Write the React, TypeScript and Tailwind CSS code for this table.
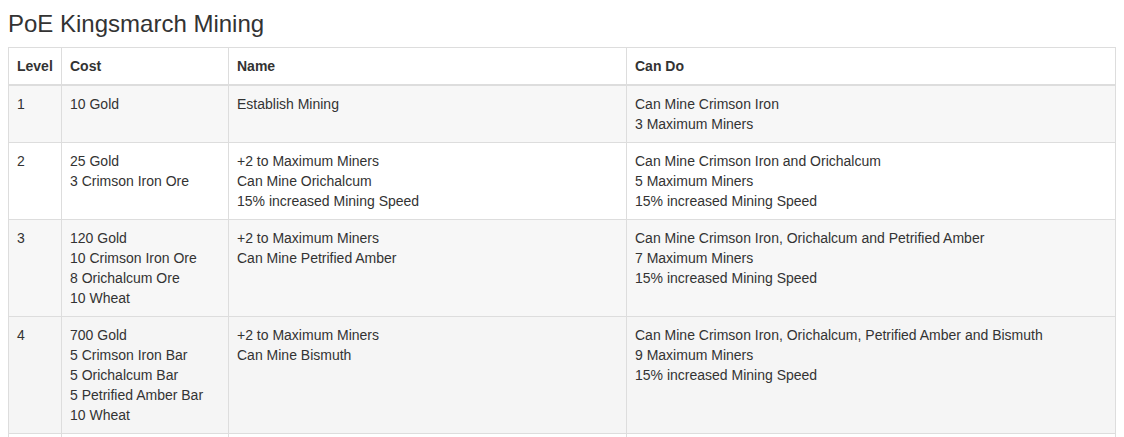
import React from "react";

const rows = [
  {
    level: "1",
    cost: ["10 Gold"],
    name: ["Establish Mining"],
    can: ["Can Mine Crimson Iron", "3 Maximum Miners"],
    bg: "bg-[#f7f7f7]",
  },
  {
    level: "2",
    cost: ["25 Gold", "3 Crimson Iron Ore"],
    name: ["+2 to Maximum Miners", "Can Mine Orichalcum", "15% increased Mining Speed"],
    can: ["Can Mine Crimson Iron and Orichalcum", "5 Maximum Miners", "15% increased Mining Speed"],
    bg: "bg-white",
  },
  {
    level: "3",
    cost: ["120 Gold", "10 Crimson Iron Ore", "8 Orichalcum Ore", "10 Wheat"],
    name: ["+2 to Maximum Miners", "Can Mine Petrified Amber"],
    can: [
      "Can Mine Crimson Iron, Orichalcum and Petrified Amber",
      "7 Maximum Miners",
      "15% increased Mining Speed",
    ],
    bg: "bg-[#f7f7f7]",
  },
  {
    level: "4",
    cost: ["700 Gold", "5 Crimson Iron Bar", "5 Orichalcum Bar", "5 Petrified Amber Bar", "10 Wheat"],
    name: ["+2 to Maximum Miners", "Can Mine Bismuth"],
    can: [
      "Can Mine Crimson Iron, Orichalcum, Petrified Amber and Bismuth",
      "9 Maximum Miners",
      "15% increased Mining Speed",
    ],
    bg: "bg-[#f5f5f5]",
  },
];

function Lines({ items }: { items: string[] }) {
  return (
    <>
      {items.map((t, i) => (
        <div key={i}>{t}</div>
      ))}
    </>
  );
}

export default function App() {
  return (
    <div
      className="px-2 pt-[11px] text-[#333] bg-white"
      style={{ fontFamily: '"Liberation Sans", Arial, sans-serif' }}
    >
      <h3 className="text-[24px] leading-[1.1] font-normal mb-[10px]">PoE Kingsmarch Mining</h3>
      <table className="w-[1108px] border-collapse border border-[#ddd] text-[14px] leading-[20px]">
        <thead>
          <tr>
            <th className="w-[53px] border border-[#ddd] border-b-2 p-2 text-left align-bottom font-bold">Level</th>
            <th className="w-[167px] border border-[#ddd] border-b-2 p-2 text-left align-bottom font-bold">Cost</th>
            <th className="w-[398px] border border-[#ddd] border-b-2 p-2 text-left align-bottom font-bold">Name</th>
            <th className="border border-[#ddd] border-b-2 p-2 text-left align-bottom font-bold">Can Do</th>
          </tr>
        </thead>
        <tbody>
          {rows.map((r, i) => (
            <tr key={i} className={r.bg}>
              <td className="border border-[#ddd] p-2 align-top">{r.level}</td>
              <td className="border border-[#ddd] p-2 align-top">
                <Lines items={r.cost} />
              </td>
              <td className="border border-[#ddd] p-2 align-top">
                <Lines items={r.name} />
              </td>
              <td className="border border-[#ddd] p-2 align-top">
                <Lines items={r.can} />
              </td>
            </tr>
          ))}
          <tr className="bg-white">
            <td className="border border-[#ddd] p-2 h-[38px]"></td>
            <td className="border border-[#ddd] p-2"></td>
            <td className="border border-[#ddd] p-2"></td>
            <td className="border border-[#ddd] p-2"></td>
          </tr>
        </tbody>
      </table>
    </div>
  );
}
